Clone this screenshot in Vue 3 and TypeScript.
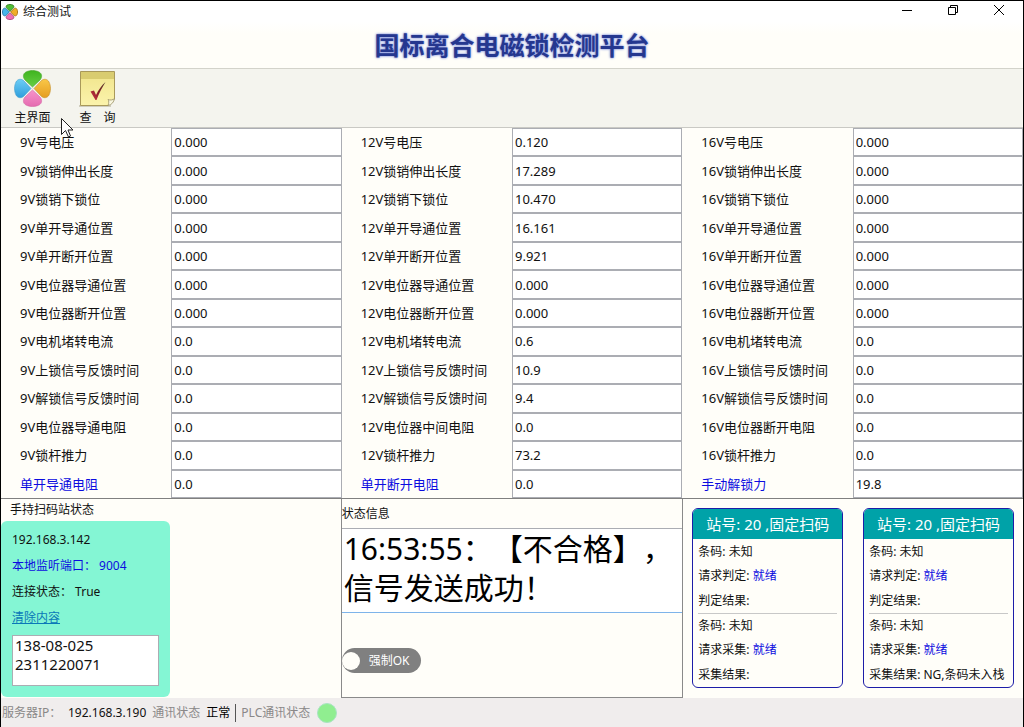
<script setup lang="ts">
import { ref } from 'vue'

interface Measure {
  label: string
  value: string
  accent?: boolean
}

interface Station {
  title: string
  judgeResult: string
  collectResult: string
}

function build(labels: string[], values: string[]): Measure[] {
  return labels.map((label, i) => ({ label, value: values[i], accent: i === labels.length - 1 }))
}

const groups = ref<Measure[][]>([
  build(
    ['9V号电压', '9V锁销伸出长度', '9V锁销下锁位', '9V单开导通位置', '9V单开断开位置', '9V电位器导通位置', '9V电位器断开位置', '9V电机堵转电流', '9V上锁信号反馈时间', '9V解锁信号反馈时间', '9V电位器导通电阻', '9V锁杆推力', '单开导通电阻'],
    ['0.000', '0.000', '0.000', '0.000', '0.000', '0.000', '0.000', '0.0', '0.0', '0.0', '0.0', '0.0', '0.0'],
  ),
  build(
    ['12V号电压', '12V锁销伸出长度', '12V锁销下锁位', '12V单开导通位置', '12V单开断开位置', '12V电位器导通位置', '12V电位器断开位置', '12V电机堵转电流', '12V上锁信号反馈时间', '12V解锁信号反馈时间', '12V电位器中间电阻', '12V锁杆推力', '单开断开电阻'],
    ['0.120', '17.289', '10.470', '16.161', '9.921', '0.000', '0.000', '0.6', '10.9', '9.4', '0.0', '73.2', '0.0'],
  ),
  build(
    ['16V号电压', '16V锁销伸出长度', '16V锁销下锁位', '16V单开导通位置', '16V单开断开位置', '16V电位器导通位置', '16V电位器断开位置', '16V电机堵转电流', '16V上锁信号反馈时间', '16V解锁信号反馈时间', '16V电位器断开电阻', '16V锁杆推力', '手动解锁力'],
    ['0.000', '0.000', '0.000', '0.000', '0.000', '0.000', '0.000', '0.0', '0.0', '0.0', '0.0', '0.0', '19.8'],
  ),
])

const stations: Station[] = [
  { title: '站号: 20 ,固定扫码', judgeResult: '', collectResult: '' },
  { title: '站号: 20 ,固定扫码', judgeResult: '', collectResult: 'NG,条码未入栈' },
]

const scanned = ref('138-08-025\n2311220071')
const message = ref('16:53:55：【不合格】，信号发送成功！')
const forceOk = ref(false)
</script>

<template>
  <div class="window">
    <header class="titlebar">
      <svg class="app-icon" viewBox="0 0 37 37" aria-hidden="true">
        <path d="M18.500 17L11 9.500C9 7 9 4 12 2.500C16 .5 21 .5 25 2.500C28 4 28 7 26 9.500Z" fill="#4fbf35" stroke="#2f7a1d" stroke-width="2" />
        <path d="M18.500 17L11 9.500C9 7 9 4 12 2.500C16 .5 21 .5 25 2.500C28 4 28 7 26 9.500Z" transform="rotate(180 18.500 18.500)" fill="#ee6fb4" stroke="#a8437a" stroke-width="2" />
        <path d="M18.500 17L11 9.500C9 7 9 4 12 2.500C16 .5 21 .5 25 2.500C28 4 28 7 26 9.500Z" transform="rotate(270 18.500 18.500)" fill="#45b4ea" stroke="#2570a8" stroke-width="2" />
        <path d="M18.500 17L11 9.500C9 7 9 4 12 2.500C16 .5 21 .5 25 2.500C28 4 28 7 26 9.500Z" transform="rotate(90 18.500 18.500)" fill="#f0ae28" stroke="#a86f10" stroke-width="2" />
      </svg>
      <span class="caption">综合测试</span>
      <div class="controls">
        <button type="button" aria-label="最小化">
          <svg width="12" height="12" viewBox="0 0 12 12"><path d="M1 6.500H11" /></svg>
        </button>
        <button type="button" aria-label="还原">
          <svg width="12" height="12" viewBox="0 0 12 12"><path d="M1.500 3.500H8.500V10.500H1.500ZM3.500 3V1.500H10.500V8.500H9" /></svg>
        </button>
        <button type="button" aria-label="关闭">
          <svg width="12" height="12" viewBox="0 0 12 12"><path d="M1 1L11 11M11 1L1 11" /></svg>
        </button>
      </div>
    </header>

    <h1>国标离合电磁锁检测平台</h1>

    <nav class="toolbar">
      <button type="button">
        <svg width="37" height="37" viewBox="0 0 37 37" aria-hidden="true">
          <defs>
            <linearGradient id="petal-green" x1="0" y1="0" x2="0" y2="1"><stop offset="0" stop-color="#3fb41f" /><stop offset="1" stop-color="#67cf45" /></linearGradient>
            <linearGradient id="petal-pink" x1="0" y1="0" x2="0" y2="1"><stop offset="0" stop-color="#f793cb" /><stop offset="1" stop-color="#e56bb0" /></linearGradient>
            <linearGradient id="petal-blue" x1="0" y1="0" x2="0" y2="1"><stop offset="0" stop-color="#6ccdf5" /><stop offset="1" stop-color="#2f9edc" /></linearGradient>
            <linearGradient id="petal-gold" x1="0" y1="0" x2="0" y2="1"><stop offset="0" stop-color="#f9c748" /><stop offset="1" stop-color="#e59d20" /></linearGradient>
          </defs>
          <path d="M18.500 17L11 10C8.500 7 9 3.500 12 2C16 0 21 0 25 2C28 3.500 28.500 7 26 10Z" fill="url(#petal-green)" stroke="#46a52c" stroke-width=".6" />
          <path d="M18.500 20L11 27C8.500 30 9 33.500 12 35C16 37 21 37 25 35C28 33.500 28.500 30 26 27Z" fill="url(#petal-pink)" stroke="#d264a1" stroke-width=".6" />
          <path d="M17 18.500L9.500 10.500C7 8.500 3.500 9 2 12C0 16 0 21 2 25C3.500 28 7 28.500 9.500 26.500Z" fill="url(#petal-blue)" stroke="#3d9ccc" stroke-width=".6" />
          <path d="M20 18.500L27.500 10.500C30 8.500 33.500 9 35 12C37 16 37 21 35 25C33.500 28 30 28.500 27.500 26.500Z" fill="url(#petal-gold)" stroke="#c58d25" stroke-width=".6" />
        </svg>
        <span>主界面</span>
      </button>
      <button type="button">
        <svg width="37" height="37" viewBox="0 0 37 37" aria-hidden="true">
          <defs>
            <linearGradient id="note" x1="0" y1="0" x2="0" y2="1"><stop offset="0" stop-color="#f0e48a" /><stop offset="1" stop-color="#fbf3ac" /></linearGradient>
            <linearGradient id="tick" x1="1" y1="0" x2="0" y2="1"><stop offset="0" stop-color="#4d3b2c" /><stop offset=".55" stop-color="#8d2028" /><stop offset="1" stop-color="#d5364c" /></linearGradient>
          </defs>
          <path d="M0 36H32" stroke="#aaa68e" />
          <path d="M1.500 1.500H35.500V29L29 35.500H1.500Z" fill="url(#note)" stroke="#a9995a" />
          <path d="M2 2H35V9H2Z" fill="#d9cc70" />
          <path d="M29 35.500C30 33 30 31 29 29.500C31 30.500 34 30 35.500 28.500C35 32 32.500 35 29 35.500Z" fill="#f8f6df" stroke="#9b9065" stroke-width=".8" />
          <path d="M11.500 21.500L15 20.500L17 25C19.500 20 22.500 15.500 26.500 12C23.500 17 20 23 17.500 30H16.500Z" fill="url(#tick)" />
        </svg>
        <span>查　询</span>
      </button>
      <svg class="pointer" width="13" height="20" viewBox="0 0 13 20" aria-hidden="true">
        <path d="M.5 .5V16.500L4.500 12.500L7.500 19L9.500 18L7 12H12Z" fill="#fff" stroke="#222" />
      </svg>
    </nav>

    <form class="measures" @submit.prevent>
      <div v-for="(group, g) in groups" :key="g" class="group">
        <div v-for="(m, i) in group" :key="m.label" class="measure">
          <label :for="`m-${g}-${i}`" :class="{ accent: m.accent }">{{ m.label }}</label>
          <input :id="`m-${g}-${i}`" v-model="m.value" type="text" />
        </div>
      </div>
    </form>

    <main class="panels">
      <section class="handheld">
        <h2>手持扫码站状态</h2>
        <div class="scanner">
          <p>192.168.3.142</p>
          <p class="accent">本地监听端口： 9004</p>
          <p>连接状态： True</p>
          <p><a href="#" @click.prevent="scanned = ''">清除内容</a></p>
          <textarea v-model="scanned" aria-label="扫码内容"></textarea>
        </div>
      </section>

      <section class="status">
        <label class="status-title" for="message">状态信息</label>
        <textarea id="message" v-model="message"></textarea>
        <label class="switch"><input v-model="forceOk" type="checkbox" /><span>强制OK</span></label>
      </section>

      <section class="stations">
        <article v-for="(s, i) in stations" :key="i" class="station">
          <h3>{{ s.title }}</h3>
          <div class="half">
            <p>条码: 未知</p>
            <p>请求判定: <span class="accent">就绪</span></p>
            <p>判定结果: {{ s.judgeResult }}</p>
          </div>
          <div class="half">
            <p>条码: 未知</p>
            <p>请求采集: <span class="accent">就绪</span></p>
            <p>采集结果: {{ s.collectResult }}</p>
          </div>
        </article>
      </section>
    </main>

    <footer class="statusbar">
      <span class="muted server">服务器IP：</span>
      <span class="address">192.168.3.190</span>
      <span class="muted">通讯状态</span>
      <span class="state">正常</span>
      <span class="muted plc">PLC通讯状态</span>
      <i class="lamp"></i>
    </footer>
  </div>
</template>

<style>
body {
  margin: 0;
}
</style>

<style scoped>
.window,
.window * {
  box-sizing: border-box;
}

.window {
  display: flex;
  flex-direction: column;
  min-height: 100vh;
  border: 1px solid #000;
  border-bottom: 0;
  background: #fffef9;
  color: #111;
  font-family: "Noto Sans", "Noto Sans CJK SC", sans-serif;
  font-size: 12px;
  line-height: 18px;
  text-spacing-trim: space-all;
}

h1,
h2,
h3,
p {
  margin: 0;
  font-size: inherit;
  font-weight: 400;
}

button,
input,
textarea {
  margin: 0;
  border: 0;
  border-radius: 0;
  color: inherit;
  font: inherit;
  text-spacing-trim: inherit;
}

button {
  padding: 0;
  background: none;
}

.accent {
  color: #0c0ce0;
}

.titlebar {
  display: flex;
  align-items: center;
  height: 21px;
  padding: 0 1px;
  background: #fff;
}

.app-icon {
  width: 16px;
  height: 16px;
}

.caption {
  margin-left: 5px;
}

.controls {
  display: flex;
  align-self: flex-start;
  margin-left: auto;
}

.controls button {
  display: flex;
  align-items: center;
  justify-content: center;
  width: 46px;
  height: 18px;
}

.controls path {
  fill: none;
  stroke: #000;
}

h1 {
  padding: 6px 0;
  border-bottom: 1px solid #d3d3cb;
  background: linear-gradient(#fff, #fffef9 12px);
  color: #25378f;
  font-size: 25px;
  font-weight: 700;
  line-height: 34px;
  text-align: center;
  text-shadow: 0 0 2px #7c8cdc, 0 0 3px #a8b2e6;
}

.toolbar {
  position: relative;
  display: flex;
  gap: 28px;
  height: 58px;
  padding: 1px 13px 0;
  background: #f4f4ee;
}

.toolbar button {
  display: flex;
  flex-direction: column;
  align-items: center;
  width: 37px;
  white-space: nowrap;
}

.toolbar button span {
  margin-top: 2px;
}

.pointer {
  position: absolute;
  top: 49px;
  left: 60px;
}

.measures {
  display: grid;
  flex: 1;
  grid-template-columns: repeat(3, 1fr);
  border-top: 1px solid #c9c9c4;
  border-bottom: 1px solid #808080;
  font-size: 13px;
}

.group {
  display: grid;
  grid-template-rows: repeat(13, 1fr);
}

.measure {
  display: grid;
  grid-template-columns: 1fr 1fr;
}

.measure label {
  align-self: center;
  padding-left: 19px;
  white-space: nowrap;
}

.measure input {
  width: 100%;
  min-width: 0;
  height: 100%;
  padding: 0 2px;
  border: 1px solid #abadb3;
  background: #fff;
}

.panels {
  display: grid;
  grid-template-columns: repeat(3, 1fr);
  min-height: 199px;
}

.handheld h2 {
  padding: 2px 9px;
}

.scanner {
  width: calc(50% - 1px);
  padding: 6px 11px 11px;
  border-radius: 6px;
  background: #84f6d4;
}

.scanner p {
  line-height: 26px;
}

.scanner a {
  color: #0a78b8;
}

.scanner textarea {
  display: block;
  width: 100%;
  height: 51px;
  margin-top: 4px;
  padding: 0 2px;
  border: 1px solid #abadb3;
  background: #fff;
  font-size: 15px;
  line-height: 19px;
  resize: none;
}

.status {
  display: flex;
  flex-direction: column;
  margin: 0 -1px;
  border: 1px solid #8a8a8a;
  border-top: 0;
}

.status-title {
  padding: 6px 0 5px;
}

.status textarea {
  width: 100%;
  height: 85px;
  padding: 0 2px;
  border-top: 1px solid #abadb3;
  border-bottom: 1px solid #7eb4ea;
  background: #fff;
  color: #000;
  font-size: 30px;
  line-height: 39px;
  overflow: hidden;
  resize: none;
}

.switch {
  display: flex;
  align-items: center;
  align-self: flex-start;
  width: 79px;
  height: 25px;
  margin-top: 35px;
  border-radius: 13px;
  background: #808080;
  color: #fff;
}

.switch input {
  width: 18px;
  height: 18px;
  margin: 0 9px 0 0;
  border-radius: 50%;
  background: #fffef9;
  appearance: none;
}

.stations {
  display: grid;
  grid-template-columns: 1fr 1fr;
  gap: 20px;
  padding: 9px 9px 10px 10px;
}

.station {
  display: flex;
  flex-direction: column;
  overflow: hidden;
  border: 1px solid #1d1da8;
  border-radius: 6px;
}

.station h3 {
  background: #00a2a8;
  color: #fff;
  font-size: 15px;
  line-height: 30px;
  text-align: center;
  white-space: nowrap;
}

.half {
  display: flex;
  flex: 1;
  flex-direction: column;
  justify-content: space-around;
  margin: 0 5px;
  padding-top: 1px;
  white-space: nowrap;
}

.half + .half {
  padding-top: 0;
  border-top: 1px solid #c8c8c8;
}

.statusbar {
  display: flex;
  align-items: center;
  height: 29px;
  padding: 1px 1px 0;
  background: #f0eded;
}

.muted {
  color: #8a8888;
}

.server {
  width: 66px;
}

.address {
  margin-right: 6px;
}

.state {
  margin: 0 5px 0 6px;
  color: #000;
}

.plc {
  padding-left: 5px;
  border-left: 1px solid #555;
}

.lamp {
  width: 20px;
  height: 20px;
  margin-left: 7px;
  border: 1px solid #a9e4c2;
  border-radius: 50%;
  background: #90ee90;
}
</style>
